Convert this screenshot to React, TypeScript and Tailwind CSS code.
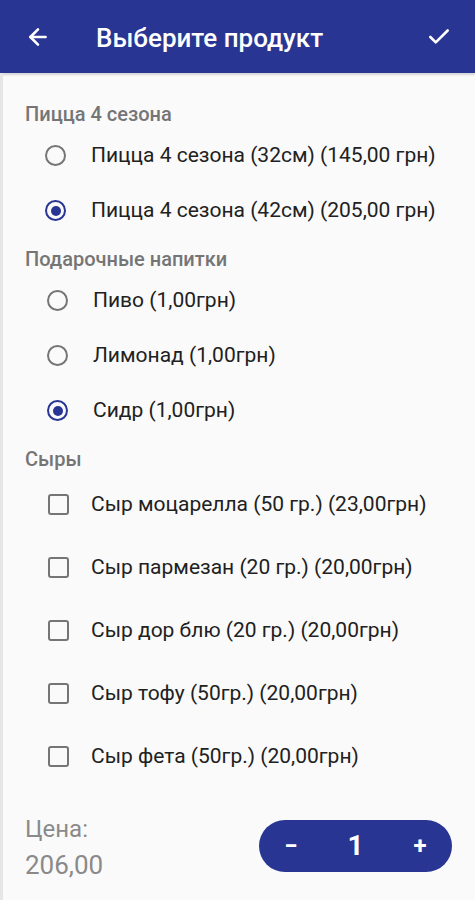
import React, { useState } from "react";
import { ArrowLeft, Check } from "lucide-react";

const pizzaOptions = [
  "Пицца 4 сезона (32см) (145,00 грн)",
  "Пицца 4 сезона (42см) (205,00 грн)",
];

const drinkOptions = ["Пиво (1,00грн)", "Лимонад (1,00грн)", "Сидр (1,00грн)"];

const cheeseOptions = [
  "Сыр моцарелла (50 гр.) (23,00грн)",
  "Сыр пармезан (20 гр.) (20,00грн)",
  "Сыр дор блю (20 гр.) (20,00грн)",
  "Сыр тофу (50гр.) (20,00грн)",
  "Сыр фета (50гр.) (20,00грн)",
];

function Radio({ checked }: { checked: boolean }) {
  return (
    <span
      className={
        "flex h-[21px] w-[21px] shrink-0 items-center justify-center rounded-full border-2 " +
        (checked ? "border-[#283593]" : "border-[#757575]")
      }
    >
      {checked && <span className="h-[10px] w-[10px] rounded-full bg-[#283593]" />}
    </span>
  );
}

function SectionLabel({ children }: { children: React.ReactNode }) {
  return (
    <div className="flex h-[26px] items-center pl-[22px] text-[20px] font-medium text-[#757575]">
      {children}
    </div>
  );
}

export default function App() {
  const [pizza, setPizza] = useState(1);
  const [drink, setDrink] = useState(2);
  const [cheese, setCheese] = useState<number[]>([]);
  const [count, setCount] = useState(1);

  return (
    <div
      className="flex min-h-[900px] w-[475px] flex-col bg-[#fafafa]"
      style={{ fontFamily: "Roboto, 'Noto Sans', sans-serif" }}
    >
      <div className="flex h-[73px] items-center bg-[#283593] px-[25px] text-white shadow-[0_2px_2px_rgba(0,0,0,0.15)]">
        <ArrowLeft size={26} strokeWidth={2.4} />
        <div className="ml-[45px] flex-1 pt-[3px] text-[26px] font-medium">Выберите продукт</div>
        <Check size={26} strokeWidth={2.4} className="-mr-[2px]" />
      </div>

      <div className="flex flex-1 flex-col border-l-[3px] border-[#e6e6e6] pt-[28px]">
        <SectionLabel>Пицца 4 сезона</SectionLabel>
        <div className="pt-[1px]">
          {pizzaOptions.map((label, i) => (
            <div
              key={label}
              onClick={() => setPizza(i)}
              className="flex h-[55px] items-center gap-[25px] pl-[42px] text-[21px] text-[#212121]"
            >
              <Radio checked={pizza === i} />
              <span>{label}</span>
            </div>
          ))}
        </div>

        <div className="mt-[8px]">
          <SectionLabel>Подарочные напитки</SectionLabel>
        </div>
        <div className="pt-[1px]">
          {drinkOptions.map((label, i) => (
            <div
              key={label}
              onClick={() => setDrink(i)}
              className="flex h-[55px] items-center gap-[25px] pl-[44px] text-[21px] text-[#212121]"
            >
              <Radio checked={drink === i} />
              <span>{label}</span>
            </div>
          ))}
        </div>

        <div className="mt-[8px]">
          <SectionLabel>Сыры</SectionLabel>
        </div>
        <div className="pt-[1px]">
          {cheeseOptions.map((label, i) => (
            <div
              key={label}
              onClick={() =>
                setCheese((c) => (c.includes(i) ? c.filter((x) => x !== i) : [...c, i]))
              }
              className="flex h-[63px] items-center gap-[22px] pl-[45px] text-[21px] text-[#212121]"
            >
              <span
                className={
                  "flex h-[21px] w-[21px] shrink-0 items-center justify-center rounded-[3px] border-[2.5px] " +
                  (cheese.includes(i) ? "border-[#283593] bg-[#283593]" : "border-[#757575]")
                }
              >
                {cheese.includes(i) && <Check size={15} strokeWidth={3} className="text-white" />}
              </span>
              <span>{label}</span>
            </div>
          ))}
        </div>

        <div className="mt-[22px] flex items-start justify-between pl-[22px] pr-[23px]">
          <div className="flex flex-col pt-[2px] text-[#8a8a8a]">
            <span className="text-[24px] leading-[35px]">Цена:</span>
            <span className="text-[26px] leading-[37px]">206,00</span>
          </div>
          <div className="mt-[10px] flex h-[52px] w-[193px] items-center justify-between rounded-full bg-[#283593] px-[22px] font-bold text-white">
            <button onClick={() => setCount((c) => Math.max(1, c - 1))} className="w-[20px] text-[24px]">
              −
            </button>
            <span className="text-[28px]">{count}</span>
            <button onClick={() => setCount((c) => c + 1)} className="w-[20px] text-[24px]">
              +
            </button>
          </div>
        </div>
      </div>
    </div>
  );
}
